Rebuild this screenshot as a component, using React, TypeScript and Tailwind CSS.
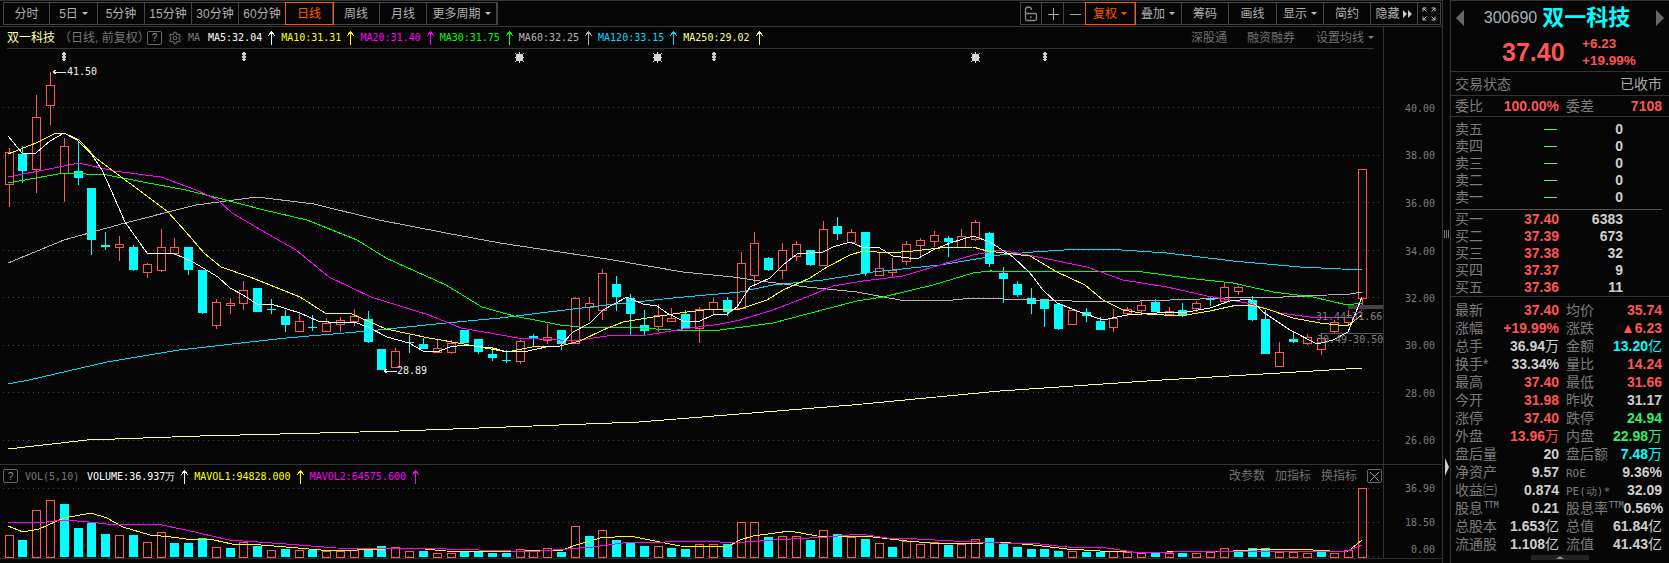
import { Settings } from "lucide-react";
import type { ReactNode } from "react";

const C: [number, number, number, number, "r" | "c"][] = [
  [152,184,148,207,"r"],[154,171,146,183,"c"],[117,169,95,193,"r"],[85,105,72,125,"r"],[146,173,138,202,"r"],
  [171,178,142,185,"c"],[188,240,188,255,"c"],[245,247,232,250,"c"],[244,247,236,261,"r"],[247,270,245,271,"c"],
  [264,272,263,278,"r"],[247,270,229,272,"r"],[247,253,238,255,"r"],[247,270,247,275,"c"],[270,313,270,314,"c"],
  [302,325,299,329,"r"],[303,305,298,314,"r"],[290,303,281,310,"r"],[288,312,288,312,"c"],[309,310,299,314,"c"],
  [316,325,310,332,"c"],[321,331,312,331,"r"],[327,328,315,331,"c"],[323,331,318,331,"r"],[320,324,317,332,"r"],
  [316,321,309,326,"r"],[319,342,311,343,"c"],[349,370,349,370,"c"],[351,367,348,367,"r"],[342,343,335,353,"c"],
  [344,349,338,349,"c"],[348,352,339,352,"r"],[343,352,340,354,"r"],[330,343,330,343,"c"],[339,352,339,354,"c"],
  [354,358,348,361,"c"],[360,361,350,363,"c"],[341,361,340,364,"r"],[336,339,334,346,"c"],[337,340,324,344,"r"],
  [330,344,330,350,"c"],[298,343,297,343,"r"],[303,307,297,321,"r"],[273,310,269,320,"r"],[284,297,276,311,"c"],
  [298,314,294,335,"c"],[325,331,310,335,"c"],[315,326,304,332,"r"],[318,321,308,322,"r"],[314,329,310,329,"c"],
  [309,328,307,343,"r"],[302,309,298,314,"r"],[300,312,297,316,"c"],[263,308,252,309,"r"],[243,275,232,285,"r"],
  [258,270,257,271,"c"],[250,270,243,279,"r"],[244,256,241,261,"r"],[250,265,250,266,"c"],[229,265,221,266,"r"],
  [226,234,217,240,"c"],[232,242,229,242,"r"],[232,273,232,276,"c"],[268,275,253,276,"r"],[270,272,258,278,"r"],
  [244,261,241,265,"r"],[240,245,238,258,"r"],[235,241,231,247,"r"],[238,242,236,257,"c"],[236,247,229,248,"r"],
  [222,239,220,241,"r"],[233,264,232,267,"c"],[273,279,267,303,"c"],[284,295,281,297,"c"],[298,304,288,314,"c"],
  [299,309,299,327,"c"],[304,329,304,330,"c"],[310,324,309,324,"r"],[312,316,308,322,"c"],[321,330,317,330,"c"],
  [318,327,309,332,"r"],[309,313,307,316,"r"],[305,310,301,313,"r"],[302,312,299,312,"c"],[311,314,307,315,"r"],
  [310,316,303,317,"c"],[303,308,301,312,"r"],[298,300,296,306,"c"],[287,301,282,304,"r"],[287,291,286,295,"r"],
  [300,320,296,321,"c"],[319,354,310,354,"c"],[352,366,342,366,"r"],[339,342,331,343,"c"],[337,343,334,345,"r"],
  [338,349,333,355,"r"],[322,331,320,333,"r"],[317,322,310,325,"r"],[169,298,169,305,"r"],
];

const V: [number, "r" | "c"][] = [
  [286,"r"],[300,"c"],[211,"r"],[181,"r"],[192,"c"],[264,"c"],[249,"c"],[282,"c"],[286,"r"],[285,"c"],
  [307,"r"],[277,"r"],[309,"c"],[309,"c"],[295,"c"],[322,"r"],[324,"c"],[307,"r"],[318,"c"],[331,"r"],
  [327,"c"],[331,"r"],[329,"c"],[333,"r"],[332,"r"],[330,"r"],[331,"c"],[318,"c"],[322,"r"],[332,"r"],
  [333,"c"],[338,"r"],[338,"r"],[335,"c"],[335,"c"],[339,"c"],[339,"c"],[328,"r"],[332,"r"],[325,"r"],
  [335,"c"],[259,"r"],[288,"c"],[271,"r"],[300,"c"],[308,"c"],[318,"c"],[319,"r"],[324,"c"],[327,"c"],
  [313,"r"],[313,"r"],[313,"c"],[247,"r"],[247,"r"],[291,"c"],[289,"r"],[289,"r"],[300,"c"],[271,"r"],
  [282,"c"],[292,"r"],[297,"c"],[310,"r"],[321,"c"],[302,"r"],[313,"r"],[307,"r"],[315,"c"],[313,"r"],
  [298,"r"],[294,"c"],[312,"c"],[321,"c"],[327,"c"],[327,"c"],[333,"c"],[334,"r"],[336,"c"],[336,"c"],
  [334,"r"],[336,"r"],[338,"r"],[338,"c"],[340,"r"],[338,"c"],[338,"r"],[335,"r"],[325,"r"],[336,"c"],
  [325,"c"],[324,"c"],[336,"r"],[336,"r"],[340,"r"],[336,"c"],[338,"r"],[331,"r"],[145,"r"],
];

const cx = (i: number) => Math.round(8.6 + i * 13.81);

const MA5 = "8,136 22,153 36,153 50,141 64,133 77,140 92,155 102,170 111,190 125,222 147,253 175,254 193,262 218,277 230,288 243,295 257,304 271,304 300,313 318,321 339,323 354,322 368,327 387,337 409,343 423,351 437,352 450,347 464,345 493,348 507,352 528,351 546,347 560,346 573,332 590,323 603,310 627,297 643,304 657,306 667,313 683,321 700,321 713,315 727,314 737,307 750,287 770,278 783,265 797,254 823,252 833,247 850,242 862,247 878,247 893,256 917,259 933,250 950,243 973,236 990,242 1013,257 1030,273 1043,290 1057,303 1077,311 1103,320 1127,315 1157,313 1187,312 1210,308 1230,301 1250,299 1263,312 1290,330 1317,344 1333,340 1348,332 1362,297";
const MA10 = "8,154 36,143 54,134 64,133 79,140 96,158 121,177 139,190 168,212 186,232 204,253 221,267 250,277 275,287 300,297 325,313 352,314 386,329 429,338 464,344 507,352 532,347 560,346 580,341 603,330 623,322 653,317 687,312 713,309 740,309 767,300 783,290 810,278 827,267 850,255 863,251 890,253 913,251 940,248 973,247 987,251 1030,256 1057,272 1085,285 1103,300 1123,310 1147,314 1180,316 1210,311 1237,305 1250,305 1267,309 1293,318 1320,323 1347,326 1362,315";
const MA20 = "8,177 54,168 79,163 114,171 161,177 196,190 218,200 232,213 261,230 296,250 329,277 371,297 429,315 461,328 518,338 560,340 580,340 607,336 647,335 683,329 720,324 740,320 773,310 807,297 833,286 863,281 903,276 940,265 973,255 1000,250 1033,256 1087,267 1123,280 1167,287 1207,296 1247,303 1280,313 1317,318 1353,317 1362,310";
const MA30 = "8,183 36,178 64,173 107,175 143,182 186,190 214,197 264,210 307,220 357,240 386,258 446,285 482,307 514,316 540,321 560,325 580,327 640,328 687,331 720,330 773,323 807,314 857,301 883,297 933,285 973,273 990,271 1143,272 1187,278 1233,283 1273,292 1313,297 1347,305 1362,303";
const MA60 = "8,263 64,240 125,223 196,205 257,197 314,204 379,220 446,233 500,243 540,249 607,259 683,272 733,277 760,281 807,287 857,292 900,300 953,300 973,298 1033,300 1110,302 1200,299 1250,297 1283,297 1350,294 1362,292";
const MA120 = "8,384 29,380 107,362 179,350 286,338 368,331 446,323 500,318 540,313 607,305 673,298 740,292 773,285 823,280 873,272 940,265 1000,255 1033,252 1080,249 1107,249 1167,253 1233,261 1300,267 1362,270";
const MA250 = "8,449 87,440 200,436 400,431 639,422 852,405 1000,391 1162,380 1280,373 1362,368";

const conv = (a: number[][], f: number, x0: number) => a.map(([u, v]) => `${Math.round(x0 + u / f)},${Math.round(440 + v / 3)}`).join(" ");
const VM1 = [
  conv([[22,258],[65,277],[110,268],[180,235],[255,220],[300,235],[345,260],[420,285],[480,292],[520,297],[600,300],[650,312],[730,315],[800,322],[900,330],[1000,330],[1160,325],[1250,332],[1430,337]],2.8,0),
  conv([[0,331],[70,330],[100,318],[180,295],[270,287],[330,301],[420,318],[560,320],[600,300],[640,287],[750,274],[830,287],[1000,292],[1100,303],[1170,310],[1330,310],[1380,307]],3,540),
  conv([[0,307],[100,315],[200,327],[300,333],[400,337],[500,337],[700,334],[800,328],[940,331],[1040,337],[1087,300]],3,1000),
].join(" ");
const VM2 = [
  conv([[22,249],[130,245],[180,240],[250,247],[300,253],[390,253],[440,253],[520,270],[640,300],[800,313],[940,325],[1250,328],[1430,332]],2.8,0),
  conv([[0,332],[80,328],[160,320],[250,308],[500,304],[580,310],[700,300],[860,290],[960,281],[1040,295],[1130,298],[1240,303],[1380,310]],3,540),
  conv([[0,310],[120,313],[200,320],[320,325],[400,335],[520,337],[650,334],[1040,332],[1087,315]],3,1000),
].join(" ");

const RED = "#ff5555";
const CYAN = "#00ffff";

function Caret({ c = "#c0c0c0" }: { c?: string }) {
  return <span className="inline-block w-0 h-0 border-x-[3px] border-x-transparent border-t-[3px] ml-[4px] align-middle" style={{ borderTopColor: c }} />;
}

function Tab({ w, on, caret, children }: { w: string; on?: boolean; caret?: boolean; children: ReactNode }) {
  return (
    <div className={`${w} h-full flex items-center justify-center text-[12px] border-r border-[#444] ${on ? "text-[#ff5a00] outline outline-1 outline-[#ff5a00] relative" : "text-[#b0b0b0]"}`}>
      {children}
      {caret && <Caret c={on ? "#ff5a00" : "#c0c0c0"} />}
    </div>
  );
}

function UpArrow({ c }: { c: string }) {
  return (
    <svg width="19" height="15" viewBox="0 0 19 15" className="shrink-0" shapeRendering="crispEdges">
      <path d="M9.5 1V15M9.5 1L6.5 6M9.5 1L12.5 6" stroke={c} fill="none" />
    </svg>
  );
}

function MaItem({ text, c }: { text: string; c: string }) {
  return (
    <div className="flex items-center">
      <span className="whitespace-pre" style={{ color: c }}>{text}</span>
      <UpArrow c={c} />
    </div>
  );
}

function Q() {
  return <div className="w-[15px] h-[14px] border border-[#666] rounded-[2px] text-[#999] text-[10px] flex items-center justify-center">?</div>;
}

function Diamond({ x }: { x: number }) {
  return <path d={`M${x - 1} 52h2v1h1v2h-1v1h1v2h-1v1h1v1h-1v1h-2v-1h-1v-1h1v-1h-1v-2h1v-1h-1v-2h1z`} fill="#cfcfcf" shapeRendering="crispEdges" />;
}
function Star({ x }: { x: number }) {
  return (
    <g shapeRendering="crispEdges" fill="#d8d8d8">
      <rect x={x - 3} y={54} width={7} height={7} />
      <rect x={x} y={52} width={1} height={11} />
      <rect x={x - 4} y={57} width={9} height={1} />
      <rect x={x - 4} y={53} width={1} height={1} /><rect x={x + 4} y={53} width={1} height={1} />
      <rect x={x - 4} y={61} width={1} height={1} /><rect x={x + 4} y={61} width={1} height={1} />
    </g>
  );
}

function Row({ label, val, c = "#cfcfcf" }: { label: ReactNode; val: string; c?: string }) {
  const unit = /[万亿]$/.test(val) ? val.slice(-1) : "";
  const num = unit ? val.slice(0, -1) : val;
  return (
    <div className="flex items-center justify-between w-full h-full">
      <span className="text-[14px] text-[#7c7c7c] whitespace-nowrap">{label}</span>
      <span className="text-[14px] font-bold whitespace-nowrap" style={{ color: c }}>
        {num}
        {unit && <span className="font-normal">{unit}</span>}
      </span>
    </div>
  );
}

const TTM = <sup className="text-[8px] text-[#7f8fa0] font-['DejaVu_Sans_Mono',monospace] ml-[1px] top-[-5px]">TTM</sup>;
const W = "#cfcfcf";
const G = "#33ee66";

const STATS: [ReactNode, string, string, ReactNode, string, string][] = [
  ["最新", "37.40", RED, "均价", "35.74", RED],
  ["涨幅", "+19.99%", RED, "涨跌", "▲6.23", RED],
  ["总手", "36.94万", W, "金额", "13.20亿", CYAN],
  ["换手*", "33.34%", W, "量比", "14.24", RED],
  ["最高", "37.40", RED, "最低", "31.66", RED],
  ["今开", "31.98", RED, "昨收", "31.17", W],
  ["涨停", "37.40", RED, "跌停", "24.94", G],
  ["外盘", "13.96万", RED, "内盘", "22.98万", G],
  ["盘后量", "20", W, "盘后额", "7.48万", CYAN],
  ["净资产", "9.57", W, <span className="font-['DejaVu_Sans_Mono',monospace] text-[11px]">ROE</span>, "9.36%", W],
  ["收益㈢", "0.874", W, <span className="font-['DejaVu_Sans_Mono',monospace] text-[11px]">PE(动)*</span>, "32.09", W],
  [<>股息{TTM}</>, "0.21", W, <>股息率{TTM}</>, "0.56%", W],
  ["总股本", "1.653亿", W, "总值", "61.84亿", W],
  ["流通股", "1.108亿", W, "流值", "41.43亿", W],
];

const SELL = ["卖五", "卖四", "卖三", "卖二", "卖一"];
const BUY: [string, string, string][] = [["买一", "37.40", "6383"], ["买二", "37.39", "673"], ["买三", "37.38", "32"], ["买四", "37.37", "9"], ["买五", "37.36", "11"]];

const AXIS = [[107.5, "40.00"], [155, "38.00"], [202.5, "36.00"], [250.5, "34.00"], [297.5, "32.00"], [345, "30.00"], [392.5, "28.00"], [440, "26.00"]] as const;

const MONO = "font-['DejaVu_Sans_Mono',monospace] text-[10px]";

function PriceChart() {
  return (
    <svg width="1442" height="415" viewBox="0 49 1442 415" className="block shrink-0">
      {AXIS.map(([y, t]) => (
        <g key={t}>
          <line x1="3" x2="1387" y1={Math.floor(y) + 0.5} y2={Math.floor(y) + 0.5} stroke="#4a4a4a" strokeDasharray="1 4" />
          <text x="1435" y={y + 4} textAnchor="end" className={`${MONO} fill-[#7c7c7c]`}>{t}</text>
        </g>
      ))}
      <line x1="1383.5" x2="1383.5" y1="49" y2="464" stroke="#333" />
      {[64, 244, 714, 1045].map((x) => <Diamond key={x} x={x} />)}
      {[519, 657, 975].map((x) => <Star key={x} x={x} />)}
      <g shapeRendering="crispEdges">
        {C.map(([t, b, h, l, k], i) => {
          const x = cx(i);
          if (k === "c") {
            return (
              <g key={i}>
                <rect x={x} y={h} width="1" height={l - h} fill={CYAN} />
                <rect x={x - 4} y={t} width="9" height={Math.max(b - t, 1)} fill={CYAN} />
              </g>
            );
          }
          return (
            <g key={i}>
              <rect x={x} y={h} width="1" height={Math.max(t - h, 0)} fill={RED} />
              <rect x={x} y={b} width="1" height={Math.max(l - b, 0)} fill={RED} />
              <rect x={x - 3.5} y={t + 0.5} width="8" height={Math.max(b - t, 1)} fill="none" stroke={RED} />
            </g>
          );
        })}
        <rect x="1348" y="305" width="35" height="4" fill="#444" />
        <rect x="1320" y="333" width="63" height="1" fill="#555" />
        <polyline points={MA250} fill="none" stroke="#ffff99" />
        <polyline points={MA120} fill="none" stroke="#00d8ff" />
        <polyline points={MA60} fill="none" stroke="#b4b4b4" />
        <polyline points={MA30} fill="none" stroke="#00ff00" />
        <polyline points={MA20} fill="none" stroke="#ff00ff" />
        <polyline points={MA10} fill="none" stroke="#ffff00" />
        <polyline points={MA5} fill="none" stroke="#ffffff" />
        <path d="M53 72H66M53 72L56 70M53 72L56 74" stroke="#e8e8e8" fill="none" />
        <path d="M384 371H397M384 371L387 369M384 371L387 373" stroke="#e8e8e8" fill="none" />
      </g>
      <text x="67" y="75" className={`${MONO} fill-[#f0f0f0]`}>41.50</text>
      <text x="397" y="374" className={`${MONO} fill-[#f0f0f0]`}>28.89</text>
      <text x="1316" y="320" className={`${MONO} fill-[#808080]`}>31.44=31.66</text>
      <text x="1317" y="343" className={`${MONO} fill-[#808080]`}>30.49-30.50</text>
    </svg>
  );
}

function VolChart() {
  return (
    <svg width="1442" height="76" viewBox="0 483 1442 76" className="block shrink-0 -mt-[4px]">
      {[488, 522].map((y) => <line key={y} x1="3" x2="1387" y1={y + 0.5} y2={y + 0.5} stroke="#4a4a4a" strokeDasharray="1 4" />)}
      <line x1="3" x2="1383" y1="556.5" y2="556.5" stroke="#4a4a4a" strokeDasharray="1 4" />
      <line x1="1383.5" x2="1383.5" y1="483" y2="559" stroke="#333" />
      <line x1="0" x2="1442" y1="558.5" y2="558.5" stroke="#2c2c2c" />
      <text x="1435" y="492" textAnchor="end" className={`${MONO} fill-[#7c7c7c]`}>36.90</text>
      <text x="1435" y="526" textAnchor="end" className={`${MONO} fill-[#7c7c7c]`}>18.50</text>
      <text x="1435" y="553" textAnchor="end" className={`${MONO} fill-[#7c7c7c]`}>0.00</text>
      <g shapeRendering="crispEdges">
        {V.map(([v, k], i) => {
          const x = cx(i);
          const y = Math.round(440 + v / 3);
          return k === "c"
            ? <rect key={i} x={x - 4} y={y} width="9" height={557 - y} fill={CYAN} />
            : <rect key={i} x={x - 3.5} y={y + 0.5} width="8" height={557 - y - 0.5} fill="none" stroke={RED} />;
        })}
        <polyline points={VM1} fill="none" stroke="#ffff00" />
        <polyline points={VM2} fill="none" stroke="#ff00ff" />
      </g>
    </svg>
  );
}

export default function App() {
  return (
    <div className="w-[1669px] h-[563px] flex bg-[#060606] overflow-hidden font-['Liberation_Sans','Noto_Sans_CJK_SC',sans-serif]">
      {/* Main column */}
      <div className="w-[1442px] shrink-0 flex flex-col border-t border-[#333]">
        <div className="h-[26px] shrink-0 flex items-start justify-between border-b border-[#333] pt-[1px] pl-[3px] pr-[1px]">
          <div className="h-[23px] flex border border-[#444]">
            <Tab w="w-[46px]">分时</Tab>
            <Tab w="w-[48px]" caret>5日</Tab>
            <Tab w="w-[47px]">5分钟</Tab>
            <Tab w="w-[47px]">15分钟</Tab>
            <Tab w="w-[47px]">30分钟</Tab>
            <Tab w="w-[47px]">60分钟</Tab>
            <Tab w="w-[47px]" on>日线</Tab>
            <Tab w="w-[47px]">周线</Tab>
            <Tab w="w-[47px]">月线</Tab>
            <Tab w="w-[70px]" caret>更多周期</Tab>
          </div>
          <div className="h-[23px] flex border border-[#444]">
            <div className="w-[21px] h-full flex items-center justify-center border-r border-[#444]">
              <svg width="16" height="16" viewBox="0 0 16 16" fill="none" stroke="#888" strokeWidth="1.3">
                <rect x="2.5" y="7.5" width="11" height="7" rx="1.5" />
                <path d="M2.5 7.5V4a3 3 0 0 1 6 0" />
                <path d="M8 10v2" />
              </svg>
            </div>
            <div className="w-[22px] h-full flex items-center justify-center border-r border-[#444]">
              <svg width="12" height="12" viewBox="0 0 12 12" stroke="#a8a8a8" shapeRendering="crispEdges"><path d="M6.5 0V12M1 6.5H12" /></svg>
            </div>
            <div className="w-[22px] h-full flex items-center justify-center">
              <svg width="12" height="12" viewBox="0 0 12 12" stroke="#a8a8a8" shapeRendering="crispEdges"><path d="M1 6.5H12" /></svg>
            </div>
            <Tab w="w-[49px]" on caret>复权</Tab>
            <Tab w="w-[47px]" caret>叠加</Tab>
            <Tab w="w-[47px]">筹码</Tab>
            <Tab w="w-[48px]">画线</Tab>
            <Tab w="w-[47px]" caret>显示</Tab>
            <Tab w="w-[47px]">简约</Tab>
            <Tab w="w-[47px]">
              隐藏
              <svg width="10" height="8" viewBox="0 0 10 8" fill="#c8c8c8" className="ml-[3px]"><path d="M0 0l4 4-4 4zM5 0l4 4-4 4z" /></svg>
            </Tab>
            <div className="w-[22px] h-full flex items-center justify-center">
              <svg width="14" height="14" viewBox="0 0 14 14" fill="none" stroke="#bdbdbd">
                <path d="M1 4.5V1h3.5M1 1l3.5 3.5M13 4.5V1H9.500M13 1L9.500 4.500M1 9.500V13h3.500M1 13l3.500-3.500M13 9.500V13H9.500M13 13L9.500 9.500" />
              </svg>
            </div>
          </div>
        </div>

        <div className="w-[1384px] h-[22px] shrink-0 border-r border-[#333] pl-[7px] pr-[9px]">
          <div className="h-full flex items-center border-b border-[#333]">
            <span className="text-[12px] text-[#ffffaa] w-[52px]">双一科技</span>
            <span className="text-[12px] text-[#777] w-[88px] whitespace-nowrap">（日线, 前复权）</span>
            <Q />
            <Settings size={14} color="#666" className="ml-[6px]" />
            <div className={`${MONO} flex items-center ml-[6px]`}>
              <span className="text-[#777] w-[20px]">MA</span>
              <MaItem text="MA5:32.04" c="#ffffff" />
              <MaItem text="MA10:31.31" c="#ffff00" />
              <MaItem text="MA20:31.40" c="#ff00ff" />
              <MaItem text="MA30:31.75" c="#00ff00" />
              <MaItem text="MA60:32.25" c="#b4b4b4" />
              <MaItem text="MA120:33.15" c="#00d8ff" />
              <MaItem text="MA250:29.02" c="#ffff99" />
            </div>
            <div className="ml-auto flex items-center text-[12px] text-[#707070]">
              <span className="mr-[20px]">深股通</span>
              <span className="mr-[21px]">融资融券</span>
              <span>设置均线</span>
              <Caret c="#808080" />
            </div>
          </div>
        </div>

        <PriceChart />

        <div className="h-[1px] shrink-0 bg-[#333]" />
        <div className="w-[1384px] h-[22px] shrink-0 border-r border-[#333] flex items-center pl-[3px] pr-[1px] relative z-10">
          <Q />
          <div className={`${MONO} flex items-center ml-[7px]`}>
            <span className="text-[#777] w-[62px]">VOL(5,10)</span>
            <MaItem text="VOLUME:36.937万" c="#ffffff" />
            <MaItem text="MAVOL1:94828.000" c="#ffff00" />
            <MaItem text="MAVOL2:64575.600" c="#ff00ff" />
          </div>
          <div className="ml-auto flex items-center text-[12px] text-[#707070]">
            <span className="mr-[10px]">改参数</span>
            <span className="mr-[10px]">加指标</span>
            <span className="mr-[10px]">换指标</span>
            <div className="w-[15px] h-[14px] border border-[#666] rounded-[2px] flex items-center justify-center">
              <svg width="9" height="9" viewBox="0 0 9 9" stroke="#999"><path d="M0 0L9 9M9 0L0 9" /></svg>
            </div>
          </div>
        </div>

        <VolChart />
      </div>

      {/* Gutter */}
      <div className="w-[8px] shrink-0 border-l border-[#333] flex flex-col items-center relative">
        <div className="mt-[230px] h-[8px] w-[5px] bg-[repeating-linear-gradient(90deg,#777_0,#777_1px,transparent_1px,transparent_2px)]" />
        <div className="mt-[220px] h-0 w-0 border-y-[9px] border-y-transparent border-l-[4px] border-l-[#d0d0d0]" />
      </div>

      {/* Sidebar */}
      <div className="flex-1 border-l border-[#333] border-t border-t-[#333] flex flex-col">
        <div className="h-[71px] border-b border-[#333] shrink-0 flex flex-col">
          <div className="h-[34px] flex items-center pl-[5px] pr-[5px] justify-between">
            <div className="w-0 h-0 border-y-[8px] border-y-transparent border-r-[8px] border-r-[#666]" />
            <div className="flex items-center mr-[6px]">
              <span className="text-[16px] text-[#a8b0b8] mr-[5px]">300690</span>
              <span className="text-[22px] font-bold text-[#00ffff] leading-none">双一科技</span>
            </div>
            <div className="w-0 h-0 border-y-[8px] border-y-transparent border-l-[8px] border-l-[#666]" />
          </div>
          <div className="flex items-center pl-[51px]">
            <span className="text-[25px] font-bold text-[#ff5555] leading-none w-[80px]">37.40</span>
            <div className="flex flex-col text-[13.5px] font-bold text-[#ff5555] leading-[17px]">
              <span>+6.23</span>
              <span>+19.99%</span>
            </div>
          </div>
        </div>
        <div className="h-[24px] shrink-0 border-b border-[#333] flex items-center justify-between pl-[4px] pr-[7px] text-[14px] pt-[1px]">
          <span className="text-[#7c7c7c]">交易状态</span>
          <span className="text-[#a8a8a8]">已收市</span>
        </div>
        <div className="h-[21px] shrink-0 border-b border-[#333] flex items-center pl-[4px] pr-[7px]">
          <div className="w-[104px] shrink-0"><Row label="委比" val="100.00%" c={RED} /></div>
          <div className="w-[96px] shrink-0 ml-[7px]"><Row label="委差" val="7108" c={RED} /></div>
        </div>
        <div className="shrink-0 pl-[4px] pr-[7px] pt-[4px]">
          {SELL.map((s) => (
            <div key={s} className="h-[17px] flex items-center">
              <span className="text-[14px] text-[#7c7c7c] w-[89px]">{s}</span>
              <span className="w-[13px] h-[1px] bg-[#44ff77] mr-[66px] shrink-0" />
              <span className="text-[14px] font-bold text-[#cfcfcf] w-[0px] flex justify-end">0</span>
            </div>
          ))}
          <div className="h-[1px] bg-[#555] mt-[3px] mb-[1px]" />
          {BUY.map(([l, p, v]) => (
            <div key={l} className="h-[17px] flex items-center">
              <span className="text-[14px] text-[#7c7c7c] w-[60px]">{l}</span>
              <span className="text-[14px] font-bold text-[#ff5555] w-[44px] text-right">{p}</span>
              <span className="text-[14px] font-bold text-[#cfcfcf] w-[64px] text-right">{v}</span>
            </div>
          ))}
        </div>
        <div className="h-[1px] bg-[#333] shrink-0" />
        <div className="pl-[4px] pr-[7px] pt-[4px] shrink-0">
          {STATS.map(([a, b, c, d, e, f], i) => (
            <div key={i} className="h-[18px] flex items-center">
              <div className="w-[104px] shrink-0 h-full"><Row label={a} val={b} c={c} /></div>
              <div className="w-[96px] shrink-0 ml-[7px] h-full"><Row label={d} val={e} c={f} /></div>
            </div>
          ))}
        </div>
        <div className="mx-auto mt-[2px] w-[58px] h-[5px] bg-[#222] flex items-center justify-center shrink-0">
          <div className="w-0 h-0 border-x-[4px] border-x-transparent border-b-[3px] border-b-[#888]" />
        </div>
      </div>
    </div>
  );
}
